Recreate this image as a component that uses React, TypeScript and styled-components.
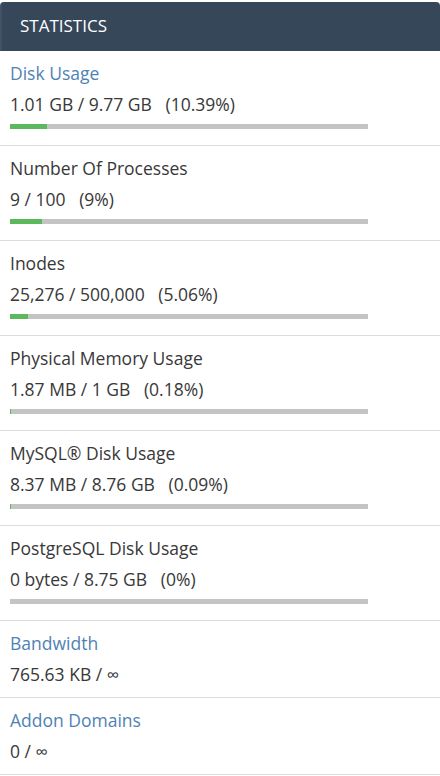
import styled, { createGlobalStyle } from "styled-components";

const GlobalStyle = createGlobalStyle`
  body {
    margin: 0;
    background: #fff;
    font-family: "Open Sans", "Liberation Sans", sans-serif;
    color: #333;
  }
`;

const Panel = styled.section`
  width: 440px;
  padding-top: 2px;
`;

const Header = styled.header`
  height: 49px;
  box-sizing: border-box;
  background: #36475a;
  border-left: 2px solid #415266;
  border-radius: 4px 4px 0 0;
  display: flex;
  align-items: center;
  padding: 0 0 3px 18px;
  color: #fff;
  font-size: 17px;
  text-transform: uppercase;
`;

const StatList = styled.ul`
  list-style: none;
  margin: 0;
  padding: 0;
`;

const Stat = styled.li<{ $bar: boolean }>`
  padding: 11px 10px 0;
  border-bottom: 1px solid #dcdcdc;
  min-height: ${(p) => (p.$bar ? "83px" : "65px")};
`;

const Label = styled.div<{ $link?: boolean }>`
  font-size: 17.5px;
  line-height: 22px;
  color: ${(p) => (p.$link ? "#4f82b4" : "#383838")};
`;

const Value = styled.div`
  margin-top: 9px;
  font-size: 17.5px;
  line-height: 22px;
  color: #383838;
  white-space: pre;
`;

const Track = styled.div`
  margin-top: 9px;
  width: 358px;
  height: 5px;
  background: #c4c4c4;
`;

const Fill = styled.div`
  height: 100%;
  background: #5cb85c;
`;

interface IStat {
  label: string;
  value: string;
  percent?: number;
  link?: boolean;
}

const stats: IStat[] = [
  { label: "Disk Usage", value: "1.01 GB / 9.77 GB   (10.39%)", percent: 10.39, link: true },
  { label: "Number Of Processes", value: "9 / 100   (9%)", percent: 9 },
  { label: "Inodes", value: "25,276 / 500,000   (5.06%)", percent: 5.06 },
  { label: "Physical Memory Usage", value: "1.87 MB / 1 GB   (0.18%)", percent: 0.18 },
  { label: "MySQL® Disk Usage", value: "8.37 MB / 8.76 GB   (0.09%)", percent: 0.09 },
  { label: "PostgreSQL Disk Usage", value: "0 bytes / 8.75 GB   (0%)", percent: 0 },
  { label: "Bandwidth", value: "765.63 KB / ∞", link: true },
  { label: "Addon Domains", value: "0 / ∞", link: true },
];

export default function App() {
  return (
    <>
      <GlobalStyle />
      <Panel>
        <Header>Statistics</Header>
        <StatList>
          {stats.map((s) => (
            <Stat key={s.label} $bar={s.percent !== undefined}>
              <Label $link={s.link}>{s.label}</Label>
              <Value>{s.value}</Value>
              {s.percent !== undefined && (
                <Track>
                  {s.percent > 0 && <Fill style={{ width: `${s.percent}%` }} />}
                </Track>
              )}
            </Stat>
          ))}
        </StatList>
      </Panel>
    </>
  );
}
